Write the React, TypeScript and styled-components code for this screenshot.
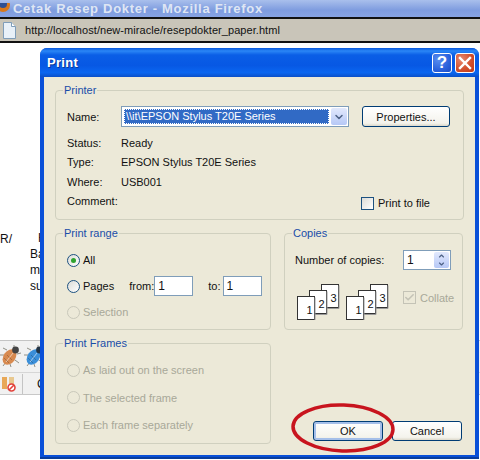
import React from 'react';
import styled, { createGlobalStyle } from 'styled-components';
import { Check, ChevronDown, ChevronUp } from 'lucide-react';

const GlobalStyle = createGlobalStyle`
  html, body {
    margin: 0;
    padding: 0;
    background: #fff;
  }
  * {
    box-sizing: border-box;
  }
`;

const Page = styled.div`
  position: relative;
  width: 480px;
  height: 460px;
  overflow: hidden;
  background: #fff;
  font-family: 'Liberation Sans', Arial, sans-serif;
  font-size: 11px;
  color: #111;
`;

const BrowserTitle = styled.div`
  height: 17px;
  display: flex;
  align-items: center;
  gap: 3px;
  overflow: hidden;
  background: linear-gradient(#a9bfec, #7e9cdf 60%, #87a3e3);
  color: #dfe6f4;
  font-size: 13px;
  font-weight: bold;
  letter-spacing: 0.7px;
`;

const AddressBar = styled.div`
  height: 26px;
  display: flex;
  align-items: center;
  gap: 9px;
  padding-left: 3px;
  background: #c9c5b9;
  border-top: 2px solid #111;
  border-bottom: 2px solid #111;
  font-size: 11px;
  letter-spacing: 0.06px;
`;

const PageBody = styled.div`
  padding-top: 188px;
  font-size: 12px;
`;

const RecipeRow = styled.div`
  display: grid;
  grid-template-columns: 30px 1fr;
  line-height: 15px;
  height: 109px;
`;

const RecipeMark = styled.div`
  padding-top: 1px;
`;

const RecipeText = styled.div`
  display: flex;
  flex-direction: column;
`;

const RecipeLine = styled.div<{ $indent?: number }>`
  height: 16px;
  padding-left: ${p => p.$indent || 0}px;
`;

const Toolbar = styled.div`
  height: 55px;
  background: #f1f1f1;
  border-top: 1px solid #c4c4c4;
  border-bottom: 1px solid #c8c8c8;
`;

const BugRow = styled.div`
  height: 32px;
  display: flex;
  align-items: center;
  gap: 3px;
  padding-left: 0;
  border-bottom: 1px solid #d6d6d6;
`;

const ActionRow = styled.div`
  height: 21px;
  display: flex;
  align-items: center;
  gap: 6px;
  padding-left: 1px;
`;

const ToolbarDivider = styled.div`
  width: 1px;
  height: 20px;
  background: #c4c4c4;
`;

const ToolbarLabel = styled.span`
  margin-left: 8px;
`;

const Dialog = styled.div`
  position: absolute;
  left: 40px;
  top: 48px;
  width: 439px;
  height: 411px;
  display: flex;
  flex-direction: column;
  border-radius: 7px 7px 0 0;
  background: #0a50d8;
  padding: 0 4px 4px;
  box-shadow: inset 0 -2px 0 #0a3d9c;
`;

const TitleBar = styled.div`
  height: 29px;
  margin: 0 -4px;
  padding: 0 4px 0 7px;
  display: flex;
  align-items: center;
  justify-content: space-between;
  border-radius: 7px 7px 0 0;
  background: linear-gradient(#0a58dc 0, #2a86f6 3px, #0a5ee6 7px, #0758e4 60%, #0a66f0 85%, #0a4fc8 100%);
`;

const DialogTitle = styled.span`
  color: #fff;
  font-size: 13px;
  font-weight: bold;
  letter-spacing: 0.3px;
  text-shadow: 1px 1px 0 #0a3a98;
`;

const WindowButtons = styled.div`
  display: flex;
  gap: 3px;
`;

const WindowButton = styled.div<{ $close?: boolean }>`
  width: 20px;
  height: 20px;
  display: flex;
  align-items: center;
  justify-content: center;
  border: 1px solid #fff;
  border-radius: 3px;
  color: #fff;
  background: ${p =>
    p.$close
      ? 'radial-gradient(circle at 30% 30%, #e98a70, #d3502e 55%, #bf3a18)'
      : 'radial-gradient(circle at 30% 30%, #5a8ff0, #2b62dc 60%, #1c4cc4)'};
`;

const HelpMark = styled.span`
  font-size: 17px;
  font-weight: bold;
  line-height: 18px;
`;

const Client = styled.div`
  flex: 1;
  background: #ece9d8;
  padding: 13px 11px 0;
  display: flex;
  flex-direction: column;
  gap: 13px;
`;

const GroupBox = styled.div<{ $height: number }>`
  position: relative;
  height: ${p => p.$height}px;
  border: 1px solid #d0d0bf;
  border-radius: 4px;
`;

const GroupTitle = styled.span`
  position: absolute;
  left: 7px;
  top: -8px;
  padding: 0 1px;
  background: #ece9d8;
  color: #1a4da8;
  line-height: 14px;
`;

const PrinterBody = styled.div`
  padding: 15px 0 0 11px;
  display: flex;
  flex-direction: column;
  gap: 6px;
`;

const PrinterSelectRow = styled.div`
  display: grid;
  grid-template-columns: 41px 228px 88px;
  column-gap: 13px;
  align-items: center;
`;

const PrinterInfo = styled.div`
  display: grid;
  grid-template-columns: 54px 228px 1fr;
  column-gap: 0;
  margin-right: 13px;
  grid-auto-rows: 19.5px;
  align-items: center;
`;

const InfoValue = styled.span`
  grid-column: 2 / 4;
`;

const ComboBox = styled.div`
  height: 21px;
  display: flex;
  align-items: center;
  gap: 2px;
  padding: 2px;
  background: #fff;
  border: 1px solid #7f9db9;
`;

const ComboText = styled.div`
  flex: 1;
  height: 15px;
  line-height: 14px;
  padding-left: 2px;
  background: #316ac5;
  color: #fff;
  outline: 1px dotted #fff;
  outline-offset: -1px;
`;

const SpinFace = styled.div`
  display: flex;
  align-items: center;
  justify-content: center;
  background: linear-gradient(#e2e9fd, #b6c8f6);
  border-radius: 2px;
  color: #4d6185;
`;

const ComboArrow = styled(SpinFace)`
  width: 16px;
  height: 17px;
  margin-right: -1px;
`;

const PushButton = styled.div<{ $default?: boolean }>`
  height: 21px;
  display: flex;
  align-items: center;
  justify-content: center;
  border: 1px solid #003c74;
  border-radius: 3px;
  background: linear-gradient(#fff, #f4f3ec 85%, #dcd8ca);
  box-shadow: ${p => (p.$default ? 'inset 0 0 0 2px #a5bfe9' : 'none')};
`;

const CheckRow = styled.div<{ $disabled?: boolean }>`
  display: flex;
  align-items: center;
  gap: 4px;
  white-space: nowrap;
  color: ${p => (p.$disabled ? '#a8a899' : '#111')};
`;

const PrintToFile = styled(CheckRow)`
  grid-column: 3;
  margin: 4px 0 0 12px;
`;

const CheckBox = styled.div<{ $disabled?: boolean }>`
  width: 13px;
  height: 13px;
  display: flex;
  align-items: center;
  justify-content: center;
  border: 1px solid ${p => (p.$disabled ? '#c4c3b6' : '#1c5180')};
  background: ${p => (p.$disabled ? '#ece9d8' : 'linear-gradient(135deg, #dcdcd7, #fff)')};
  color: #c4c3b6;
`;

const MiddleRow = styled.div`
  display: grid;
  grid-template-columns: 216px 179px;
  column-gap: 13px;
`;

const RadioList = styled.div<{ $gap?: number }>`
  padding: 13px 0 0 11px;
  display: flex;
  flex-direction: column;
  gap: ${p => p.$gap || 0}px;
`;

const RadioRow = styled.div<{ $disabled?: boolean }>`
  height: 26px;
  display: flex;
  align-items: center;
  gap: 3px;
  color: ${p => (p.$disabled ? '#a8a899' : '#111')};
  white-space: nowrap;
`;

const RadioCircle = styled.div<{ $disabled?: boolean; $on?: boolean }>`
  width: 13px;
  height: 13px;
  flex: none;
  display: flex;
  align-items: center;
  justify-content: center;
  border-radius: 50%;
  border: 1px solid ${p => (p.$disabled ? '#c9c8ba' : '#1c5180')};
  background: ${p => (p.$disabled ? '#ece9d8' : 'linear-gradient(135deg, #dcdcd7, #fff)')};
  &::after {
    content: '';
    display: ${p => (p.$on ? 'block' : 'none')};
    width: 5px;
    height: 5px;
    border-radius: 50%;
    background: #2fa32f;
  }
`;

const PageField = styled.div`
  width: 39px;
  height: 20px;
  display: flex;
  align-items: center;
  padding-left: 3px;
  font-size: 12px;
  background: #fff;
  border: 1px solid #7f9db9;
  color: #111;
`;

const FromLabel = styled.span`
  margin: 0 -3px 0 12px;
`;

const ToLabel = styled.span`
  margin: 0 -1px 0 12px;
`;

const CopiesBody = styled.div`
  padding: 16px 11px 0 10px;
  display: flex;
  flex-direction: column;
`;

const CopiesRow = styled.div`
  display: flex;
  align-items: center;
  justify-content: space-between;
`;

const SpinField = styled(PageField)`
  width: 48px;
  padding: 0 1px 0 3px;
  justify-content: space-between;
`;

const SpinButtons = styled(SpinFace)`
  width: 15px;
  height: 16px;
  flex-direction: column;
`;

const CollateRow = styled.div`
  margin: 14px -11px 0 2px;
  display: flex;
  align-items: flex-start;
  gap: 6px;
  svg {
    flex: none;
  }
`;

const CollateCheck = styled(CheckRow)`
  margin: 7px 0 0 8px;
`;

const BottomRow = styled.div`
  display: grid;
  grid-template-columns: 216px 179px;
  column-gap: 13px;
`;

const DialogButtons = styled.div`
  display: flex;
  justify-content: flex-end;
  align-items: flex-end;
  gap: 9px;
  padding: 0 1px 3px 0;
`;

const DialogButton = styled(PushButton)`
  width: 70px;
  height: 20px;
`;

const RedCircle = styled.svg`
  position: absolute;
  left: 288px;
  top: 398px;
  pointer-events: none;
`;

const FirefoxIcon = () => (
  <svg width="10" height="11" viewBox="0 0 10 11">
    <circle cx="3" cy="2" r="7" fill="#d8781c" />
    <circle cx="3" cy="1" r="4" fill="#2e4f92" />
  </svg>
);

const DocIcon = () => (
  <svg width="13" height="17" viewBox="0 0 13 17">
    <path d="M.5.5h8l4 4v12H.5z" fill="#e8f0f8" stroke="#7f9db9" />
    <path d="M8.5.5v4h4" fill="#fff" stroke="#7f9db9" />
  </svg>
);

const BugIcon = ({ body, head }: { body: string; head: string }) => (
  <svg width="21" height="23" viewBox="0 0 21 23">
    <g stroke="#8f8f86" strokeWidth="1" fill="none">
      <path d="M7 5 3 3M4 10 0 10M6 17l-3 4M14 3l0-3M17 9l4-1M15 15l4 3M10 19l1 3" />
    </g>
    <ellipse cx="9.5" cy="12" rx="6" ry="8.5" transform="rotate(35 9.5 12)" fill={body} />
    <path d="M6 17 13 8" stroke="#fff" strokeOpacity=".55" />
    <path d="M4 13 9 18M7 10l5 5" stroke="#000" strokeOpacity=".2" />
    <circle cx="15.5" cy="5" r="3.4" fill={head} />
  </svg>
);

const PauseBlockIcon = () => (
  <svg width="15" height="16" viewBox="0 0 15 16">
    <rect x="1" y="1" width="5" height="12" fill="#e8a858" />
    <rect x="8" y="1" width="5" height="12" fill="#e8c890" />
    <circle cx="10.5" cy="11.5" r="3.5" fill="#fff" stroke="#e2413a" strokeWidth="1.6" />
    <path d="M8 14 13 9" stroke="#e2413a" strokeWidth="1.6" />
  </svg>
);

const CloseGlyph = () => (
  <svg width="14" height="14" viewBox="0 0 14 14">
    <path d="M2 2 12 12M12 2 2 12" stroke="#fff" strokeWidth="2.4" strokeLinecap="square" />
  </svg>
);

const CollateStack = () => (
  <svg width="43" height="36" viewBox="0 0 43 36" fontFamily="Liberation Sans, sans-serif" fontSize="11">
    {[
      { x: 24.5, y: 0.5, n: '3' },
      { x: 12.5, y: 6.5, n: '2' },
      { x: 0.5, y: 12.5, n: '1' },
    ].map(p => (
      <g key={p.n}>
        <rect x={p.x} y={p.y} width="17" height="23" fill="#fff" stroke="#333" />
        <path d={`M${p.x + 17.5} ${p.y + 1}v23h-16`} fill="none" stroke="#999" />
        <text x={p.x + 9} y={p.y + 17} fill="#111">{p.n}</text>
      </g>
    ))}
  </svg>
);

const Radio = ({ label, on, disabled }: { label: string; on?: boolean; disabled?: boolean }) => (
  <RadioRow $disabled={disabled}>
    <RadioCircle $on={on} $disabled={disabled} />
    {label}
  </RadioRow>
);

export default function App() {
  return (
    <Page>
      <GlobalStyle />
      <BrowserTitle>
        <FirefoxIcon />
        Cetak Resep Dokter - Mozilla Firefox
      </BrowserTitle>
      <AddressBar>
        <DocIcon />
        http://localhost/new-miracle/resepdokter_paper.html
      </AddressBar>
      <PageBody>
        <RecipeRow>
          <RecipeMark>R/</RecipeMark>
          <RecipeText>
            <RecipeLine $indent={8}>H</RecipeLine>
            <RecipeLine>Ba</RecipeLine>
            <RecipeLine>m</RecipeLine>
            <RecipeLine>su</RecipeLine>
          </RecipeText>
        </RecipeRow>
        <Toolbar>
          <BugRow>
            <BugIcon body="#d88a50" head="#444" />
            <BugIcon body="#3a8ed8" head="#234" />
          </BugRow>
          <ActionRow>
            <PauseBlockIcon />
            <ToolbarDivider />
            <ToolbarLabel>C</ToolbarLabel>
          </ActionRow>
        </Toolbar>
      </PageBody>

      <Dialog>
        <TitleBar>
          <DialogTitle>Print</DialogTitle>
          <WindowButtons>
            <WindowButton>
              <HelpMark>?</HelpMark>
            </WindowButton>
            <WindowButton $close>
              <CloseGlyph />
            </WindowButton>
          </WindowButtons>
        </TitleBar>
        <Client>
          <GroupBox $height={130}>
            <GroupTitle>Printer</GroupTitle>
            <PrinterBody>
              <PrinterSelectRow>
                <span>Name:</span>
                <ComboBox>
                  <ComboText>\\it\EPSON Stylus T20E Series</ComboText>
                  <ComboArrow>
                    <ChevronDown size={12} strokeWidth={3} />
                  </ComboArrow>
                </ComboBox>
                <PushButton>Properties...</PushButton>
              </PrinterSelectRow>
              <PrinterInfo>
                <span>Status:</span>
                <InfoValue>Ready</InfoValue>
                <span>Type:</span>
                <InfoValue>EPSON Stylus T20E Series</InfoValue>
                <span>Where:</span>
                <InfoValue>USB001</InfoValue>
                <span>Comment:</span>
                <PrintToFile>
                  <CheckBox />
                  Print to file
                </PrintToFile>
              </PrinterInfo>
            </PrinterBody>
          </GroupBox>

          <MiddleRow>
            <GroupBox $height={97}>
              <GroupTitle>Print range</GroupTitle>
              <RadioList>
                <Radio label="All" on />
                <RadioRow>
                  <RadioCircle />
                  Pages
                  <FromLabel>from:</FromLabel>
                  <PageField>1</PageField>
                  <ToLabel>to:</ToLabel>
                  <PageField>1</PageField>
                </RadioRow>
                <Radio label="Selection" disabled />
              </RadioList>
            </GroupBox>
            <GroupBox $height={97}>
              <GroupTitle>Copies</GroupTitle>
              <CopiesBody>
                <CopiesRow>
                  Number of copies:
                  <SpinField>
                    1
                    <SpinButtons>
                      <ChevronUp size={9} strokeWidth={3.5} />
                      <ChevronDown size={9} strokeWidth={3.5} />
                    </SpinButtons>
                  </SpinField>
                </CopiesRow>
                <CollateRow>
                  <CollateStack />
                  <CollateStack />
                  <CollateCheck $disabled>
                    <CheckBox $disabled>
                      <Check size={11} strokeWidth={3.5} />
                    </CheckBox>
                    Collate
                  </CollateCheck>
                </CollateRow>
              </CopiesBody>
            </GroupBox>
          </MiddleRow>

          <BottomRow>
            <GroupBox $height={101}>
              <GroupTitle>Print Frames</GroupTitle>
              <RadioList $gap={1.5}>
                <Radio label="As laid out on the screen" disabled />
                <Radio label="The selected frame" disabled />
                <Radio label="Each frame separately" disabled />
              </RadioList>
            </GroupBox>
            <DialogButtons>
              <DialogButton $default>OK</DialogButton>
              <DialogButton>Cancel</DialogButton>
            </DialogButtons>
          </BottomRow>
        </Client>
      </Dialog>

      <RedCircle width="112" height="60" viewBox="0 0 112 60">
        <ellipse cx="55" cy="30" rx="50" ry="23" transform="rotate(2 55 30)" fill="none" stroke="#c8141e" strokeWidth="3.5" />
      </RedCircle>
    </Page>
  );
}
